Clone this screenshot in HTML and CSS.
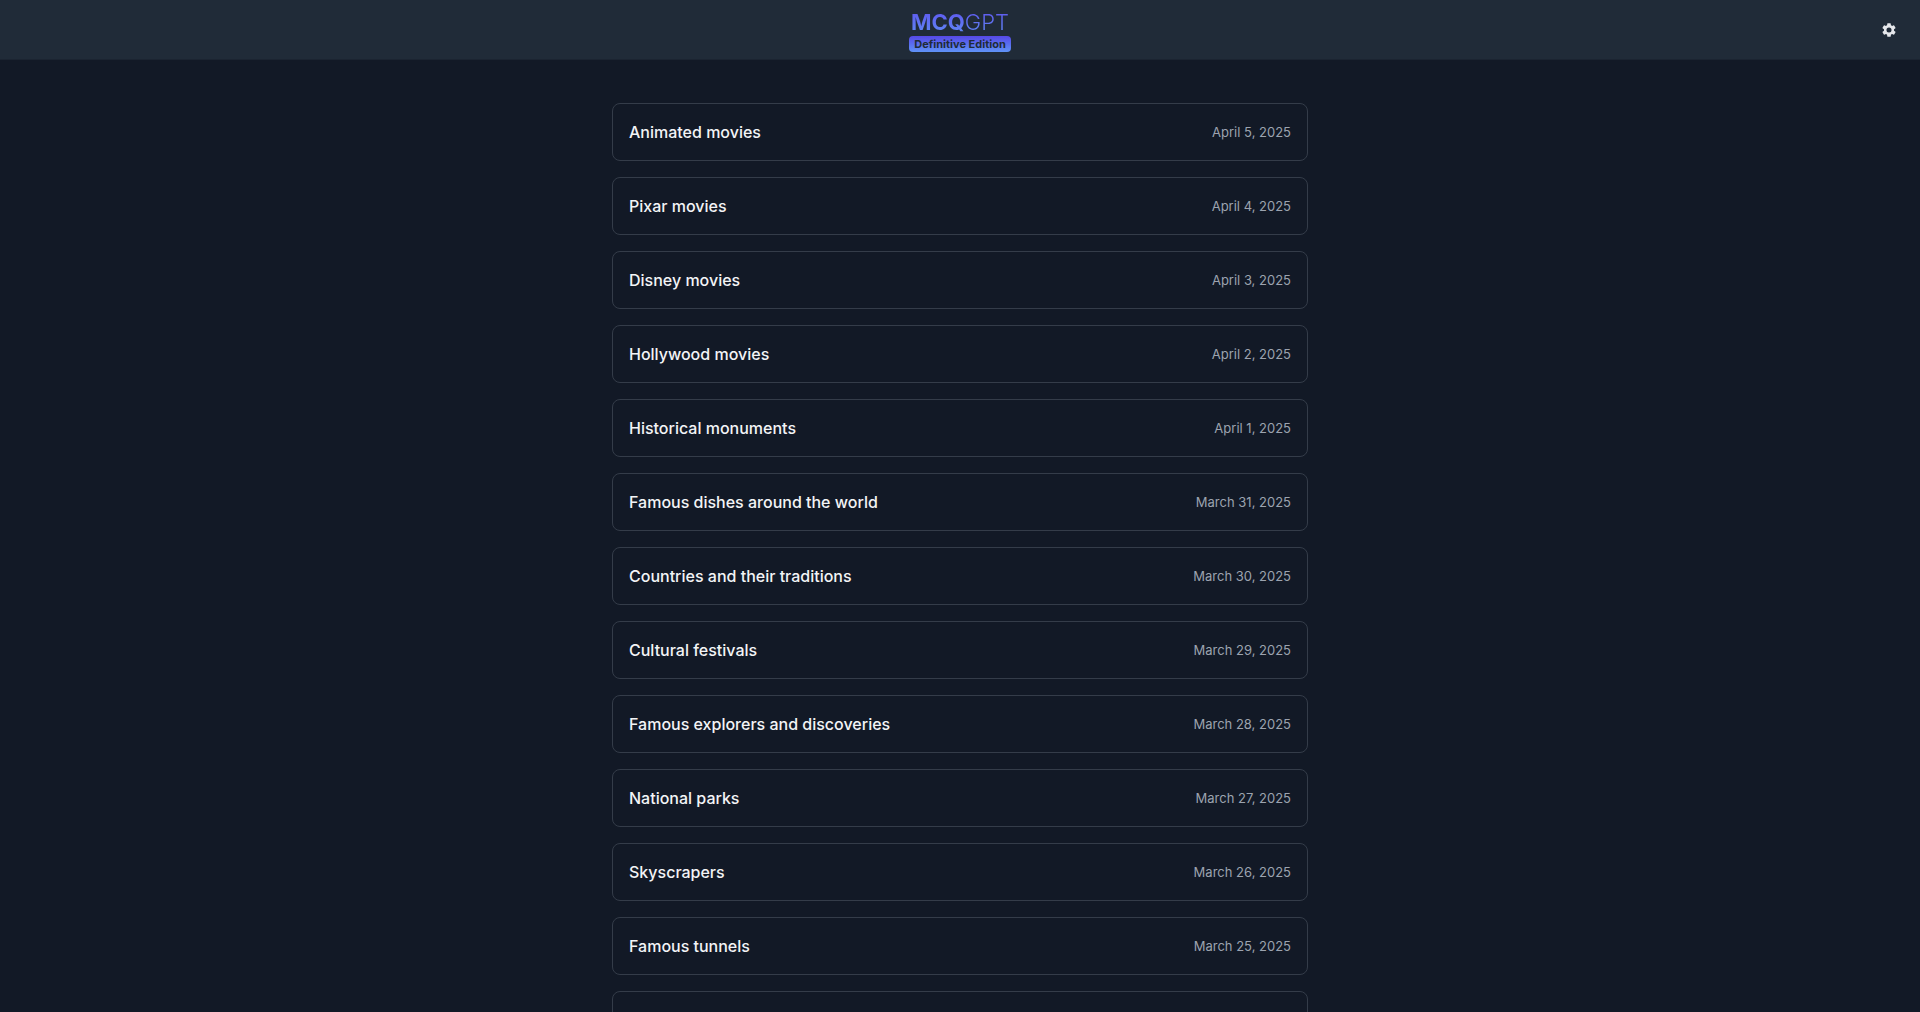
FILE: index.html
```
<!DOCTYPE html>
<html lang="en">
    <head>
        <meta charset="utf-8">
        <title>MCQGPT</title>
        <link rel="stylesheet" href="styles.css">
    </head>
    <body>
        <header class="navbar">
            <a href="#" class="brand">
                <span class="brand-name"><b>MCQ</b>GPT</span>
                <span class="edition">Definitive Edition</span>
            </a>
            <button class="settings-btn" aria-label="Settings">
                <svg viewBox="2 2 20 20" width="14" height="14" fill="currentColor">
                    <path d="M19.14 12.94c.04-.3.06-.61.06-.94s-.02-.64-.07-.94l2.03-1.58a.5.5 0 0 0 .12-.61l-1.92-3.32a.5.5 0 0 0-.59-.22l-2.39.96a7 7 0 0 0-1.62-.94l-.36-2.54a.5.5 0 0 0-.48-.41h-3.84a.5.5 0 0 0-.47.41l-.36 2.54a7.4 7.4 0 0 0-1.62.94l-2.39-.96a.5.5 0 0 0-.59.22L2.74 8.87a.5.5 0 0 0 .12.61l2.03 1.58a6 6 0 0 0 0 1.88l-2.03 1.58a.5.5 0 0 0-.12.61l1.92 3.32c.12.22.37.29.59.22l2.39-.96c.5.38 1.03.7 1.62.94l.36 2.54c.05.24.24.41.48.41h3.84c.24 0 .44-.17.47-.41l.36-2.54a7.4 7.4 0 0 0 1.62-.94l2.39.96c.22.08.47 0 .59-.22l1.92-3.32a.5.5 0 0 0-.12-.61zM12 15.6a3.6 3.6 0 1 1 0-7.2 3.6 3.6 0 0 1 0 7.2z"/>
                </svg>
            </button>
        </header>

        <main class="quiz-list">
            <a href="#" class="quiz"><span class="title">Animated movies</span><time class="date">April 5, 2025</time></a>
            <a href="#" class="quiz"><span class="title">Pixar movies</span><time class="date">April 4, 2025</time></a>
            <a href="#" class="quiz"><span class="title">Disney movies</span><time class="date">April 3, 2025</time></a>
            <a href="#" class="quiz"><span class="title">Hollywood movies</span><time class="date">April 2, 2025</time></a>
            <a href="#" class="quiz"><span class="title">Historical monuments</span><time class="date">April 1, 2025</time></a>
            <a href="#" class="quiz"><span class="title">Famous dishes around the world</span><time class="date">March 31, 2025</time></a>
            <a href="#" class="quiz"><span class="title">Countries and their traditions</span><time class="date">March 30, 2025</time></a>
            <a href="#" class="quiz"><span class="title">Cultural festivals</span><time class="date">March 29, 2025</time></a>
            <a href="#" class="quiz"><span class="title">Famous explorers and discoveries</span><time class="date">March 28, 2025</time></a>
            <a href="#" class="quiz"><span class="title">National parks</span><time class="date">March 27, 2025</time></a>
            <a href="#" class="quiz"><span class="title">Skyscrapers</span><time class="date">March 26, 2025</time></a>
            <a href="#" class="quiz"><span class="title">Famous tunnels</span><time class="date">March 25, 2025</time></a>
            <a href="#" class="quiz"><span class="title">Famous bridges</span><time class="date">March 24, 2025</time></a>
        </main>
    </body>
</html>
```
FILE: styles.css
```
* {
    box-sizing: border-box;
}

html {
    scrollbar-width: none;
}

body {
    margin: 0;
    font-family: Inter, "Liberation Sans", sans-serif;
    background-color: #121926;
    color: #f3f4f6;
}

a {
    color: inherit;
    text-decoration: none;
}

.navbar {
    display: grid;
    grid-template-columns: 1fr auto 1fr;
    align-items: center;
    padding: 8px 20px 7px;
    background-color: #202b38;
    border-bottom: 1px solid #1b2431;
}

.brand {
    grid-column: 2;
    display: flex;
    flex-direction: column;
    align-items: center;
}

.brand-name {
    font-size: 22px;
    line-height: 28px;
    font-weight: 300;
    color: transparent;
    background: linear-gradient(#5f52ee, #5f8df5);
    background-clip: text;
}

.brand-name b {
    font-weight: 700;
}

.edition {
    padding: 0 5px;
    font-size: 11px;
    line-height: 16px;
    font-weight: 700;
    color: #202b38;
    background: linear-gradient(#5648e6, #5f93f7);
    border-radius: 4px;
}

.settings-btn {
    justify-self: end;
    display: flex;
    padding: 4px;
    color: #e5e7eb;
    background: none;
    border: none;
    cursor: pointer;
}

.quiz-list {
    display: flex;
    flex-direction: column;
    gap: 16px;
    max-width: 696px;
    margin: 0 auto;
    padding: 43px 0;
}

.quiz {
    display: flex;
    justify-content: space-between;
    align-items: center;
    padding: 16px;
    border: 1px solid #343c49;
    border-radius: 8px;
}

.quiz:hover {
    background-color: #202b38;
}

.title {
    font-size: 16px;
    line-height: 24px;
    font-weight: 500;
}

.date {
    font-size: 13px;
    color: #9ca3af;
}
```
